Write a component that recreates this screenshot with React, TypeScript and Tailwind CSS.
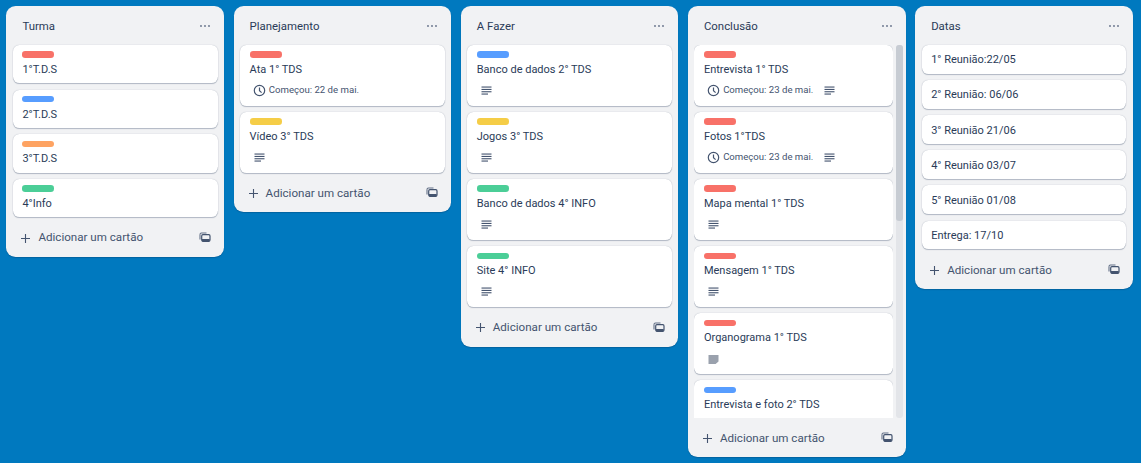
import React from "react";

const RED = "bg-[#f87168]";
const BLUE = "bg-[#579dff]";
const ORANGE = "bg-[#fea362]";
const GREEN = "bg-[#4bce97]";
const YELLOW = "bg-[#f5cd47]";

const Desc = () => (
  <svg width="11" height="11" viewBox="0 0 11 11" className="shrink-0" fill="#44546f">
    <rect x="0.5" y="1.5" width="10" height="1.1" />
    <rect x="0.5" y="3.9" width="10" height="1.1" />
    <rect x="0.5" y="6.2" width="10" height="1.1" />
    <rect x="0.5" y="8.5" width="6.5" height="1.1" />
  </svg>
);

const Comment = () => (
  <svg width="11" height="11" viewBox="0 0 11 11" className="shrink-0" fill="#9aa1ad">
    <path d="M0.5 1h10v6.6L7.6 10H0.5z" />
  </svg>
);

const Clock = () => (
  <svg width="13" height="13" viewBox="0 0 13 13" className="shrink-0" fill="none" stroke="#44546f" strokeWidth="1.2">
    <circle cx="6.5" cy="6.5" r="5.2" />
    <path d="M6.5 3.4V6.7L8.6 8.6" />
  </svg>
);

const Dots = () => (
  <svg width="12" height="4" viewBox="0 0 12 4" fill="#626f86">
    <circle cx="2" cy="2" r="0.9" />
    <circle cx="6" cy="2" r="0.9" />
    <circle cx="10" cy="2" r="0.9" />
  </svg>
);

const Plus = () => (
  <svg width="13" height="13" viewBox="0 0 13 13" className="shrink-0" fill="none" stroke="#44546f" strokeWidth="1.1">
    <path d="M6.5 2v9M2 6.5h9" />
  </svg>
);

const Template = () => (
  <svg width="12" height="12" viewBox="0 0 12 12" className="shrink-0" fill="none">
    <path d="M1 2.5C1 1.7 1.6 1 2.5 1h5" stroke="#626f86" strokeWidth="1.1" />
    <path d="M1 2.5v5" stroke="#626f86" strokeWidth="1.1" />
    <rect x="2.7" y="2.7" width="8.3" height="6.6" rx="1.2" stroke="#44546f" strokeWidth="1.2" />
    <rect x="3" y="7" width="7.7" height="2.4" fill="#44546f" />
  </svg>
);

type CardT = { label?: string; title: string; date?: string; desc?: boolean; comment?: boolean };

function Card({ label, title, date, desc, comment }: CardT) {
  const hasBadges = date || desc || comment;
  return (
    <div className="shrink-0 rounded-[6.4px] bg-white px-[9.6px] pt-[6.4px] pb-[6.4px] shadow-[0_1px_1px_#091e4240,0_0_1px_#091e424f]">
      {label && <div className={`mb-[3.2px] h-[6.4px] w-[32px] rounded-[3.2px] ${label}`} />}
      <div className="-mb-[1px] pt-[1px] text-[11px] leading-[16px] text-[#2a3b58]">{title}</div>
      {hasBadges && (
        <div className="flex h-[22.4px] items-center pt-[5px]">
          {date && (
            <span className="ml-[3.2px] flex items-center gap-[3px]">
              <Clock />
              <span className="text-[9.6px] text-[#44546f]">Começou: {date}</span>
            </span>
          )}
          {desc && (
            <span className={date ? "ml-[11px]" : "ml-[4px]"}>
              <Desc />
            </span>
          )}
          {comment && (
            <span className="ml-[4px]">
              <Comment />
            </span>
          )}
        </div>
      )}
    </div>
  );
}

function Column({ title, cards, scroll }: { title: string; cards: CardT[]; scroll?: boolean }) {
  return (
    <div className="flex w-[217.6px] shrink-0 flex-col rounded-[9.6px] bg-[#f1f2f4] shadow-[0_1px_1px_#091e4240]">
      <div className="flex h-[38.4px] shrink-0 items-center justify-between pl-[16px] pr-[13px]">
        <span className="pt-[1px] text-[11.4px] text-[#2a3b58]">{title}</span>
        <Dots />
      </div>
      {scroll ? (
        <div className="flex h-[372.8px] pl-[6.4px] pr-[3px]">
          <div className="flex min-w-0 flex-1 flex-col gap-[6.4px] overflow-hidden">
            {cards.map((c) => (
              <Card key={c.title} {...c} />
            ))}
          </div>
          <div className="ml-[3px] w-[6.4px] shrink-0 rounded-[3px] bg-[#091e420f]">
            <div className="h-[176px] rounded-[3px] bg-[#c7ccd3]" />
          </div>
        </div>
      ) : (
        <div className="flex flex-col gap-[6.4px] px-[6.4px]">
          {cards.map((c) => (
            <Card key={c.title} {...c} />
          ))}
        </div>
      )}
      <div className="flex h-[39.6px] shrink-0 items-center px-[13px] pt-[2px]">
        <Plus />
        <span className="ml-[6px] flex-1 text-[11.6px] text-[#44546f]">Adicionar um cartão</span>
        <Template />
      </div>
    </div>
  );
}

export default function App() {
  return (
    <div className="flex h-[463px] w-[1141px] items-start gap-[9.6px] overflow-hidden bg-[#0079bf] pl-[6.4px] pt-[6.4px] font-['Roboto','Noto_Sans',sans-serif]">
      <Column
        title="Turma"
        cards={[
          { label: RED, title: "1°T.D.S" },
          { label: BLUE, title: "2°T.D.S" },
          { label: ORANGE, title: "3°T.D.S" },
          { label: GREEN, title: "4°Info" },
        ]}
      />
      <Column
        title="Planejamento"
        cards={[
          { label: RED, title: "Ata 1° TDS", date: "22 de mai." },
          { label: YELLOW, title: "Vídeo 3° TDS", desc: true },
        ]}
      />
      <Column
        title="A Fazer"
        cards={[
          { label: BLUE, title: "Banco de dados 2° TDS", desc: true },
          { label: YELLOW, title: "Jogos 3° TDS", desc: true },
          { label: GREEN, title: "Banco de dados 4° INFO", desc: true },
          { label: GREEN, title: "Site 4° INFO", desc: true },
        ]}
      />
      <Column
        title="Conclusão"
        scroll
        cards={[
          { label: RED, title: "Entrevista 1° TDS", date: "23 de mai.", desc: true },
          { label: RED, title: "Fotos 1°TDS", date: "23 de mai.", desc: true },
          { label: RED, title: "Mapa mental 1° TDS", desc: true },
          { label: RED, title: "Mensagem 1° TDS", desc: true },
          { label: RED, title: "Organograma 1° TDS", comment: true },
          { label: BLUE, title: "Entrevista e foto 2° TDS", desc: true },
        ]}
      />
      <Column
        title="Datas"
        cards={[
          { title: "1° Reunião:22/05" },
          { title: "2° Reunião: 06/06" },
          { title: "3° Reunião 21/06" },
          { title: "4° Reunião 03/07" },
          { title: "5° Reunião 01/08" },
          { title: "Entrega: 17/10" },
        ]}
      />
    </div>
  );
}
